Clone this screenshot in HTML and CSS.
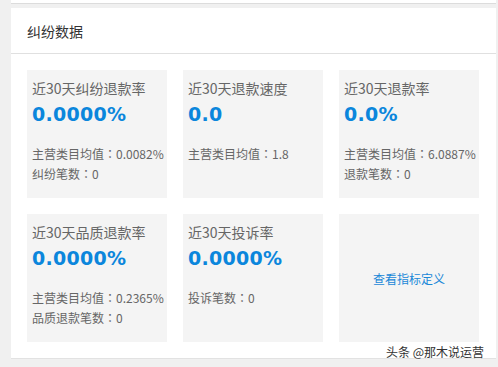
FILE: index.html
```
<!DOCTYPE html>
<html>
<head>
	<meta charset="utf-8">
	<title>纠纷数据</title>
<link rel="stylesheet" href="styles.css">
</head>
<body>

<div class="topbar"></div>

<div class="panel">
	<div class="panelhead">纠纷数据</div>

	<div class="cards">
		<div class="card">
			<div class="cardtitle">近30天纠纷退款率</div>
			<div class="cardvalue">0.0000%</div>
			<div class="cardsub">主营类目均值<span class="sep">：</span>0.0082%</div>
			<div class="cardsub">纠纷笔数<span class="sep">：</span>0</div>
		</div>

		<div class="card">
			<div class="cardtitle">近30天退款速度</div>
			<div class="cardvalue">0.0</div>
			<div class="cardsub">主营类目均值<span class="sep">：</span>1.8</div>
		</div>

		<div class="card">
			<div class="cardtitle">近30天退款率</div>
			<div class="cardvalue">0.0%</div>
			<div class="cardsub">主营类目均值<span class="sep">：</span>6.0887%</div>
			<div class="cardsub">退款笔数<span class="sep">：</span>0</div>
		</div>

		<div class="card">
			<div class="cardtitle">近30天品质退款率</div>
			<div class="cardvalue">0.0000%</div>
			<div class="cardsub">主营类目均值<span class="sep">：</span>0.2365%</div>
			<div class="cardsub">品质退款笔数<span class="sep">：</span>0</div>
		</div>

		<div class="card">
			<div class="cardtitle">近30天投诉率</div>
			<div class="cardvalue">0.0000%</div>
			<div class="cardsub">投诉笔数<span class="sep">：</span>0</div>
		</div>

		<div class="card cardlink">
			<a class="deflink" href="#">查看指标定义</a>
		</div>
	</div>
</div>

<div class="watermark">头条 @那木说运营</div>

</body>
</html>
```

FILE: styles.css
```
	body {
		margin:0;
		padding:0 2px 0 11px;
		background-color:#f0f0f0;
		font-family:"Noto Sans CJK SC", "Liberation Sans", sans-serif;
		height:367px;
		overflow:hidden;
		position:relative;}

	.topbar {
		height:3px;
		background-color:white;
		border-bottom:1px solid #dcdcdc;}

	.panel {
		margin-top:4px;
		background-color:white;
		border-bottom:1px solid #e2e2e2;
		padding-bottom:16px;}

	.panelhead {
		height:45px;
		line-height:47px;
		padding-left:16px;
		font-size:14px;
		color:#333;
		border-bottom:1px solid #e0e0e0;}

	.cards {
		display:grid;
		grid-template-columns:140px 140px 140px;
		grid-auto-rows:128px;
		gap:16px;
		padding:16px 0 0 16px;}

	.card {
		background-color:#f4f4f4;
		padding:8px 0 0 5px;
		box-sizing:border-box;}

	.cardtitle {
		font-size:14px;
		line-height:20px;
		color:#666;}

	.cardvalue {
		font-family:"DejaVu Sans", Verdana, sans-serif;
		font-weight:bold;
		font-size:19px;
		line-height:26px;
		letter-spacing:0.3px;
		color:#0b86dc;
		margin-top:3px;
		margin-bottom:17px;}

	.cardsub {
		font-size:12px;
		line-height:20px;
		color:#666;
		white-space:nowrap;}

	.sep {
		font-family:"Noto Sans CJK TC", sans-serif;}

	.cardlink {
		display:flex;
		justify-content:center;
		align-items:center;
		padding:0;}

	.deflink {
		font-size:12px;
		color:#1a88d8;
		text-decoration:none;}

	.watermark {
		position:absolute;
		left:386px;
		top:343px;
		font-size:12px;
		line-height:18px;
		color:#333;
		text-shadow:0 0 2px white, 0 0 2px white;}
```
